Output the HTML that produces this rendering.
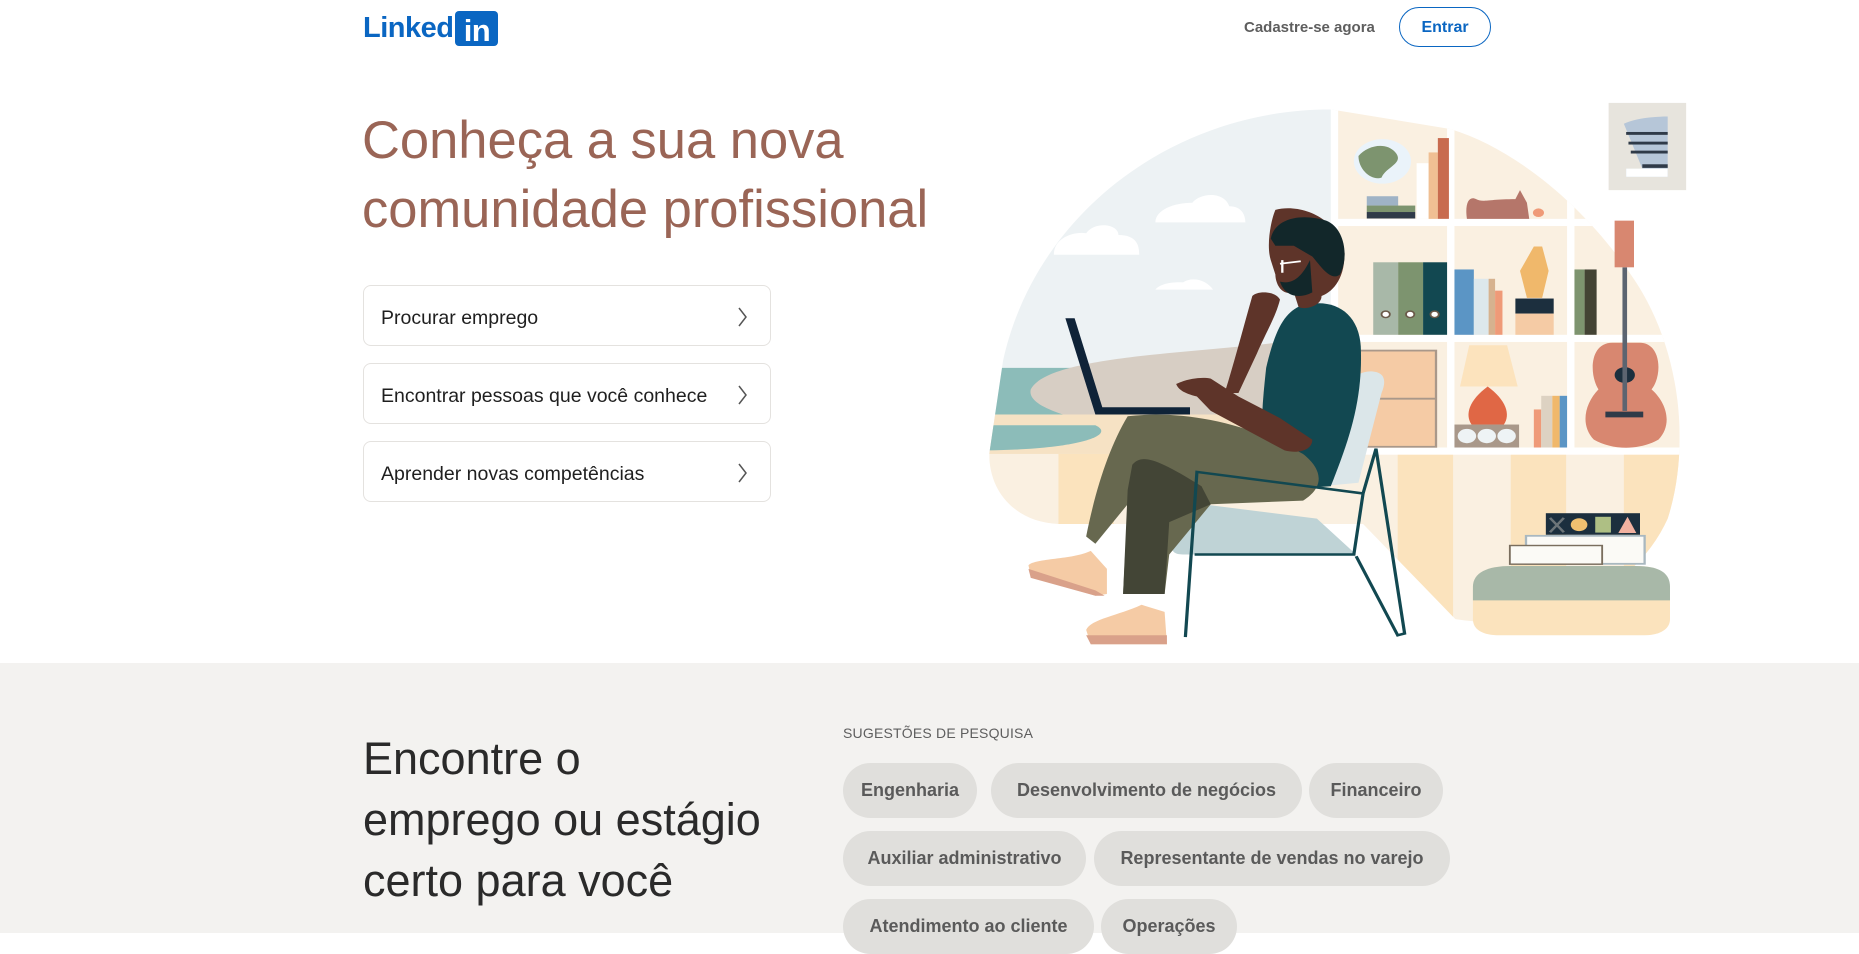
<!DOCTYPE html>
<html><head><meta charset="utf-8"><style>
*{margin:0;padding:0;box-sizing:border-box}
body{width:1859px;height:933px;overflow:hidden;background:#fff;font-family:"Liberation Sans",sans-serif;position:relative}
.abs{position:absolute}
.logo{left:363px;top:11px;height:34px;display:flex;align-items:center}
.logo .t{color:#0a66c2;font-weight:bold;font-size:29px;letter-spacing:-0.5px;line-height:34px}
.logo .in{background:#0a66c2;color:#fff;font-weight:bold;font-size:31px;width:43px;height:35px;border-radius:4px;margin-left:2px;text-align:center;line-height:40px;letter-spacing:-0.5px}
.cad{left:1244px;top:17px;font-size:15px;color:#5e5e5e;font-weight:bold;line-height:22px}
.btn{left:1399px;top:7px;width:92px;height:40px;border:1px solid #0a66c2;border-radius:20px;color:#0a66c2;font-weight:bold;font-size:16px;text-align:center;line-height:40px}
h1{position:absolute;left:362px;top:106px;font-weight:normal;font-size:52.5px;line-height:69px;color:#9a6556;letter-spacing:0px}
.card{position:absolute;left:363px;width:408px;height:61px;border:1px solid #e4e2df;border-radius:8px;font-size:19.5px;color:#1f1f1f;padding-left:17px;line-height:64px}
.card svg{position:absolute;right:22px;top:21px}
.gray{left:0;top:663px;width:1859px;height:270px;background:#f3f2f0}
h2{position:absolute;left:363px;top:728px;font-weight:normal;font-size:45px;line-height:61px;color:#2a2a2a}
.sug{left:843px;top:725px;font-size:14px;color:#5e5e5e;letter-spacing:0.2px}
.pill{position:absolute;height:55px;border-radius:28px;background:#e0dfdc;color:#5a5a5a;font-weight:bold;font-size:18px;line-height:55px;text-align:center}
</style></head><body>
<div class="abs logo"><span class="t">Linked</span><span class="in">in</span></div>
<div class="abs cad">Cadastre-se agora</div>
<div class="abs btn">Entrar</div>
<h1>Conheça a sua nova<br>comunidade profissional</h1>
<div class="card" style="top:285px">Procurar emprego<svg width="10" height="20" viewBox="0 0 10 20"><path d="M1 1 L8 10 L1 19" fill="none" stroke="#555" stroke-width="1.5"/></svg></div>
<div class="card" style="top:363px">Encontrar pessoas que você conhece<svg width="10" height="20" viewBox="0 0 10 20"><path d="M1 1 L8 10 L1 19" fill="none" stroke="#555" stroke-width="1.5"/></svg></div>
<div class="card" style="top:441px">Aprender novas competências<svg width="10" height="20" viewBox="0 0 10 20"><path d="M1 1 L8 10 L1 19" fill="none" stroke="#555" stroke-width="1.5"/></svg></div>

<svg class="abs" style="left:980px;top:95px" width="720" height="560" viewBox="0 0 1560 1560" preserveAspectRatio="none">
<defs><clipPath id="blob"><path d="M760,40 C420,40 120,330 50,740 L20,1000 C20,1110 80,1190 170,1195 L830,1195 L1030,1460 C1230,1500 1420,1380 1490,1180 C1540,980 1520,700 1410,500 C1310,310 1160,150 1020,95 Z"/></clipPath></defs>
<g clip-path="url(#blob)">
<rect x="0" y="0" width="770" height="1000" fill="#edf2f4"/>
<rect x="770" y="0" width="800" height="1000" fill="#faf0e1"/>
<path d="M0,760 L780,760 L780,890 L0,890Z" fill="#8cbcb9"/>
<path d="M110,820 C150,720 500,720 700,680 L780,680 L780,930 L300,930 C200,900 100,870 110,820Z" fill="#d7cec4"/>
<rect x="0" y="890" width="780" height="110" fill="#f6e2c4"/>
<path d="M0,920 L250,920 C300,950 200,990 0,990Z" fill="#8cbcb9"/>
<rect x="0" y="1000" width="1560" height="500" fill="#faf0e1"/>
<rect x="170" y="1000" width="120" height="200" fill="#fbe3bd"/>
<rect x="905" y="1000" width="120" height="500" fill="#fbe3bd"/>
<rect x="1150" y="1000" width="120" height="500" fill="#fbe3bd"/>
<rect x="1395" y="1000" width="120" height="500" fill="#fbe3bd"/>
<g fill="#fff"><rect x="760" y="40" width="16" height="960"/><rect x="1012" y="40" width="16" height="960"/><rect x="1272" y="40" width="16" height="960"/><rect x="770" y="345" width="800" height="20"/><rect x="770" y="668" width="800" height="20"/><rect x="770" y="982" width="800" height="20"/></g>
<path d="M380,355 C380,320 420,300 460,300 C480,270 530,270 540,310 C570,310 575,340 575,355Z" fill="#fff"/>
<path d="M160,445 C160,400 200,380 230,385 C250,350 300,360 300,390 C340,390 345,420 345,445Z" fill="#fff"/>
<path d="M380,542 C390,525 420,520 440,522 C460,505 490,515 505,542Z" fill="#fff"/>
</g>
<rect x="1362" y="22" width="168" height="243" fill="#e7e4dd"/>
<path d="M1395,80 C1420,65 1460,60 1490,60 L1490,228 L1400,228 L1400,205 L1435,205 Z" fill="#b6c6d8"/>
<g fill="#2f3a48"><rect x="1400" y="103" width="90" height="8"/><rect x="1405" y="130" width="85" height="8"/><rect x="1410" y="155" width="80" height="8"/><rect x="1435" y="193" width="55" height="10"/></g>
<rect x="1400" y="205" width="90" height="23" fill="#fff"/>
<circle cx="872" cy="185" r="62" fill="#eaf3fa"/>
<path d="M820,170 C840,140 880,130 900,160 C920,190 880,200 870,230 C850,240 820,210 820,170Z" fill="#7d946f"/>
<rect x="838" y="282" width="68" height="26" fill="#9fb3c6"/>
<rect x="838" y="308" width="105" height="18" fill="#7d946f"/><rect x="838" y="326" width="105" height="18" fill="#2f3a48"/>
<rect x="946" y="190" width="26" height="155" fill="#fff"/><rect x="972" y="160" width="20" height="185" fill="#f0bf93"/><rect x="992" y="120" width="24" height="225" fill="#c86b4f"/>
<path d="M1055,345 C1050,300 1060,280 1075,290 C1090,300 1100,290 1160,290 L1170,265 L1185,300 L1190,345Z" fill="#b5766a"/>
<circle cx="1210" cy="328" r="12" fill="#ef9a78"/>
<rect x="852" y="466" width="54" height="202" fill="#a8b8a8"/><rect x="906" y="466" width="54" height="202" fill="#7d946f"/><rect x="960" y="466" width="52" height="202" fill="#124851"/>
<g fill="#fff" stroke="#6b5a4a" stroke-width="4"><circle cx="879" cy="611" r="9"/><circle cx="932" cy="611" r="9"/><circle cx="985" cy="611" r="9"/></g>
<rect x="1028" y="486" width="42" height="182" fill="#5b95c5"/><rect x="1070" y="512" width="32" height="156" fill="#dde8ec"/><rect x="1102" y="512" width="14" height="156" fill="#d6b28f"/><rect x="1116" y="545" width="16" height="123" fill="#ef9a78"/>
<path d="M1200,422 L1218,422 L1232,490 L1218,565 L1185,565 L1170,490Z" fill="#f0b86b"/>
<rect x="1160" y="567" width="83" height="42" fill="#1c2f3e"/><rect x="1160" y="609" width="83" height="59" fill="#f5cba5"/>
<rect x="1288" y="486" width="22" height="182" fill="#7d946f"/><rect x="1310" y="486" width="26" height="182" fill="#434334"/>
<rect x="820" y="712" width="168" height="268" fill="#f5cba5" stroke="#a9988a" stroke-width="5"/><line x1="820" y1="846" x2="988" y2="846" stroke="#a9988a" stroke-width="5"/>
<path d="M1060,697 L1142,697 L1165,812 L1040,812Z" fill="#fce3bd"/>
<path d="M1100,812 C1140,850 1150,890 1135,918 L1065,918 C1050,890 1060,850 1100,812Z" fill="#e06745"/>
<rect x="1028" y="918" width="140" height="64" fill="#a9988a"/>
<g fill="#eef3f5"><circle cx="1055" cy="950" r="20"/><circle cx="1098" cy="950" r="20"/><circle cx="1141" cy="950" r="20"/></g>
<rect x="1200" y="876" width="16" height="106" fill="#ef9a78"/><rect x="1216" y="838" width="24" height="144" fill="#ddd2c2"/><rect x="1240" y="838" width="16" height="144" fill="#f0b86b"/><rect x="1256" y="838" width="16" height="144" fill="#5b95c5"/>
<path d="M1370,690 C1320,690 1320,780 1340,820 C1310,860 1300,920 1330,960 C1370,990 1430,990 1470,960 C1500,920 1490,860 1455,820 C1480,780 1475,690 1430,690Z" fill="#d88770"/>
<circle cx="1397" cy="780" r="22" fill="#1c2f3e"/>
<rect x="1392" y="480" width="10" height="400" fill="#5c6470"/>
<rect x="1375" y="350" width="42" height="130" fill="#d88770"/>
<rect x="1355" y="882" width="82" height="16" fill="#2f3a48"/>
<path d="M1068,1380 C1068,1330 1100,1312 1150,1312 L1420,1312 C1470,1312 1495,1330 1495,1380 L1495,1460 C1495,1490 1470,1505 1440,1505 L1125,1505 C1090,1505 1068,1490 1068,1460Z" fill="#fbe3bd"/>
<path d="M1068,1408 L1068,1370 C1068,1330 1100,1312 1150,1312 L1420,1312 C1470,1312 1495,1330 1495,1370 L1495,1408Z" fill="#a8b8a8"/>
<rect x="1183" y="1228" width="257" height="78" fill="#fbfaf6" stroke="#a9b8c0" stroke-width="5"/>
<rect x="1148" y="1255" width="200" height="52" fill="#fbfaf6" stroke="#7a6e5e" stroke-width="4"/>
<rect x="1226" y="1165" width="204" height="60" fill="#1c2f3e"/>
<circle cx="1298" cy="1197" r="18" fill="#f0c070"/><rect x="1333" y="1175" width="34" height="44" fill="#aebf84"/><path d="M1403,1175 L1422,1220 L1383,1220Z" fill="#f2b1a0"/>
<path d="M1235,1178 L1265,1218 M1265,1178 L1235,1218" stroke="#6c7478" stroke-width="6"/>
<path d="M185,622 L205,622 L265,870 L455,870 L455,890 L250,890Z" fill="#0f2338"/>
<path d="M845,770 C880,770 880,800 870,830 L820,1080 L740,1090 L780,840 C790,800 820,770 845,770Z" fill="#dbe6e9"/>
<path d="M415,1150 C415,1140 430,1135 450,1135 L730,1180 L815,1280 L440,1280 C420,1280 415,1270 415,1255Z" fill="#bfd3d6"/>
<path d="M500,995 L675,1030 L670,1070 L498,1035Z" fill="#dbe6e9"/>
<path d="M690,590 C760,560 820,600 825,700 C830,850 800,960 760,1090 L640,1100 C600,1000 610,880 620,760 C640,650 660,610 690,590Z" fill="#124851"/>
<path d="M320,895 C420,880 560,900 700,1000 C740,1040 750,1090 700,1130 L500,1140 L410,1280 L400,1390 L310,1390 L320,1140 L250,1250 L230,1230 C250,1100 280,980 320,895Z" fill="#67684f"/>
<path d="M330,1030 C350,1000 380,1010 480,1090 L500,1140 L410,1190 L400,1390 L310,1390 L320,1100Z" fill="#434536"/>
<path d="M640,320 C700,300 780,350 790,440 C790,520 760,550 740,560 C740,590 700,600 690,590 L680,550 C650,560 640,520 640,500 L630,460 C620,420 630,350 640,320Z" fill="#5e3429"/>
<path d="M630,400 C640,340 700,330 750,350 C790,370 800,450 780,500 C760,520 740,480 720,450 L680,420 L640,420Z" fill="#12272a"/>
<path d="M650,520 C680,530 700,500 715,460 L720,550 C690,570 660,560 650,520Z" fill="#12272a"/>
<path d="M650,470 L695,463 M655,460 L655,495" stroke="#fff" stroke-width="5"/>
<path d="M590,560 C600,545 640,545 650,570 C640,620 620,660 600,720 L560,830 L530,830 C550,750 570,650 590,560Z" fill="#5e3429"/>
<path d="M425,805 C450,790 480,785 500,790 L560,840 L650,900 L720,960 C720,990 690,1000 660,990 L500,880 L470,840 C440,830 430,820 425,805Z" fill="#5e3429"/>
<path d="M105,1310 C120,1290 200,1295 240,1270 L275,1320 L275,1390 L250,1395 L110,1340Z" fill="#f5cba5"/>
<path d="M105,1320 L250,1380 L270,1395 L250,1395 L110,1345Z" fill="#d9a18a"/>
<path d="M230,1490 C240,1460 300,1450 350,1420 L400,1440 L405,1530 L240,1530Z" fill="#f5cba5"/>
<path d="M230,1505 L405,1505 L405,1530 L240,1530Z" fill="#d9a18a"/>
<path d="M445,1510 L470,1050 L830,1110 L810,1280 L465,1280 M830,1110 L858,985 L920,1500 L905,1505 L815,1285" fill="none" stroke="#124851" stroke-width="7"/>
</svg>

<div class="abs gray"></div>
<h2>Encontre o<br>emprego ou estágio<br>certo para você</h2>
<div class="abs sug">SUGESTÕES DE PESQUISA</div>
<div class="pill" style="left:843px;top:763px;width:134px">Engenharia</div>
<div class="pill" style="left:991px;top:763px;width:311px">Desenvolvimento de negócios</div>
<div class="pill" style="left:1309px;top:763px;width:134px">Financeiro</div>
<div class="pill" style="left:843px;top:831px;width:243px">Auxiliar administrativo</div>
<div class="pill" style="left:1094px;top:831px;width:356px">Representante de vendas no varejo</div>
<div class="pill" style="left:843px;top:899px;width:251px">Atendimento ao cliente</div>
<div class="pill" style="left:1101px;top:899px;width:136px">Operações</div>
</body></html>
